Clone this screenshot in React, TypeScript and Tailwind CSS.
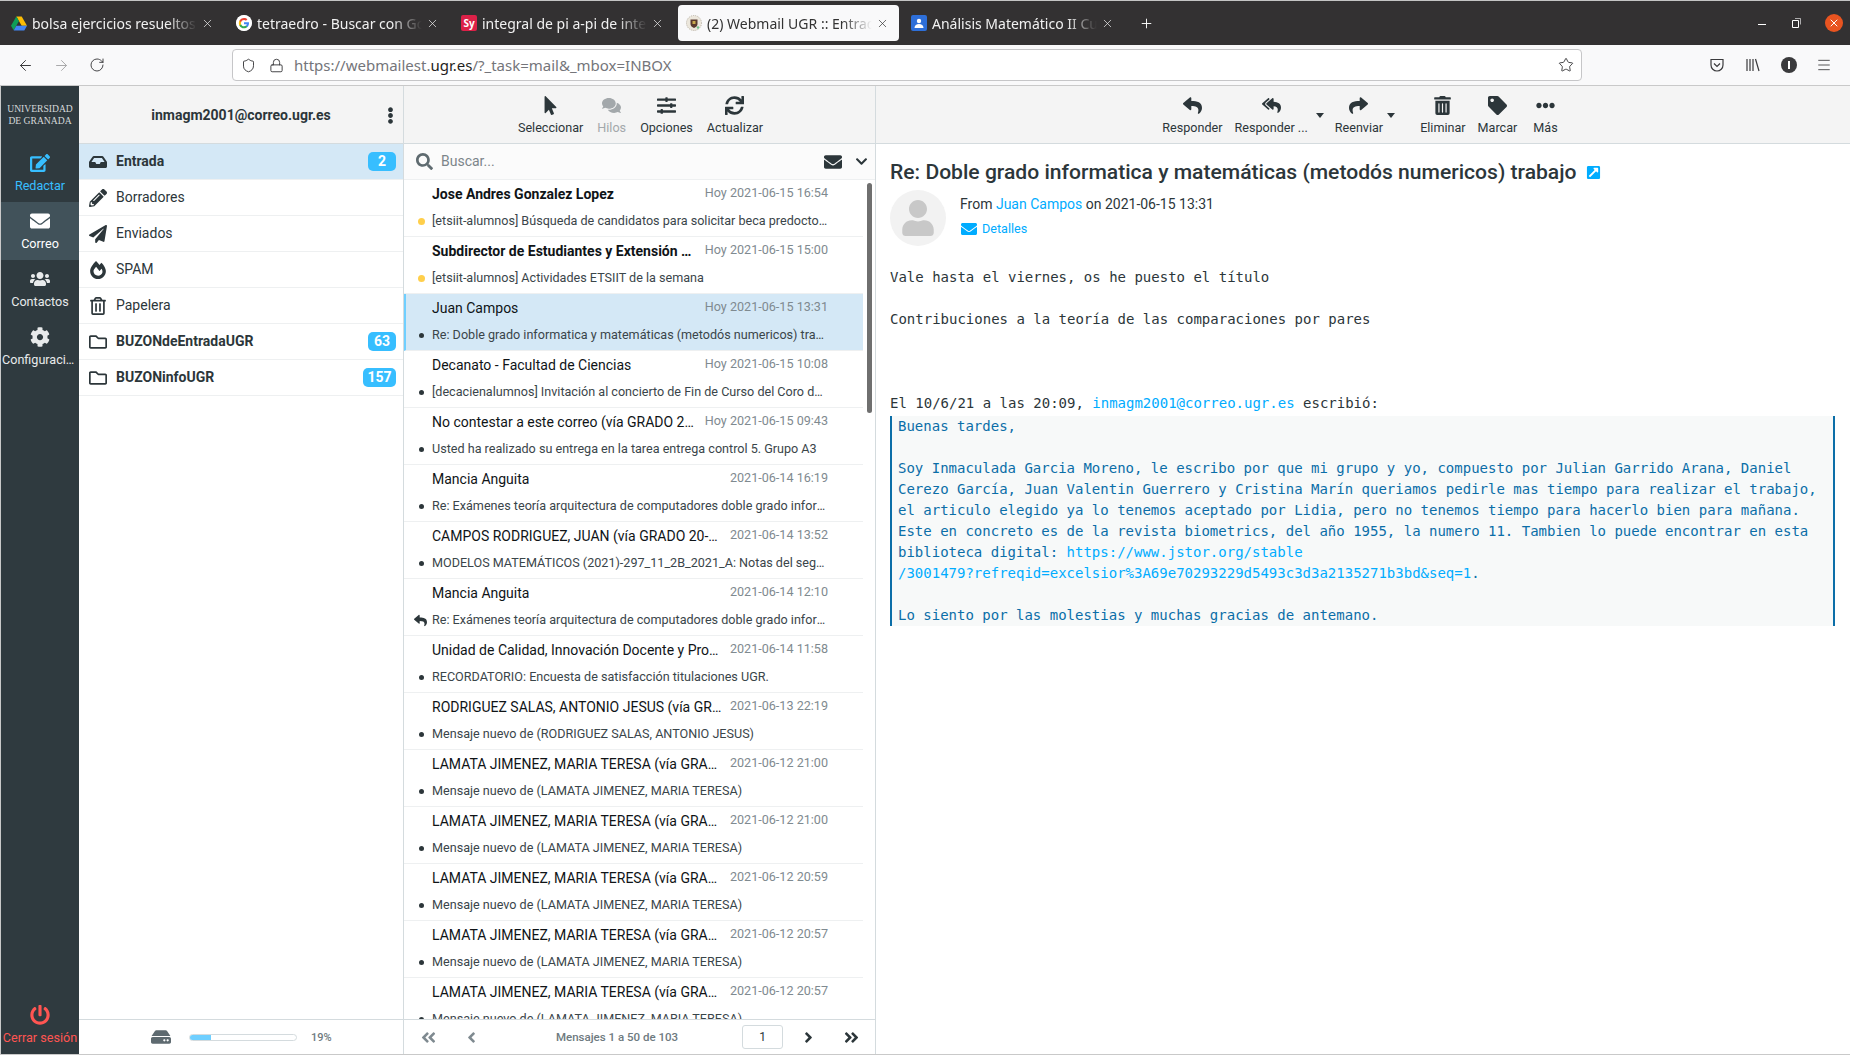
import React from "react";
import { ArrowLeft, ArrowRight, RotateCw, Shield, Lock, Star, Menu, X, Plus } from "lucide-react";
import {
  FaMousePointer, FaComments, FaSlidersH, FaSync, FaReply, FaReplyAll, FaShare, FaTrashAlt, FaTag, FaEllipsisH,
  FaEdit, FaEnvelope, FaUsers, FaCog, FaPowerOff, FaInbox, FaPencilAlt, FaPaperPlane, FaFireAlt, FaRegTrashAlt,
  FaRegFolder, FaSearch, FaChevronDown, FaHdd, FaAngleDoubleLeft, FaAngleLeft, FaAngleRight, FaAngleDoubleRight,
  FaUser, FaEllipsisV, FaExternalLinkSquareAlt,
} from "react-icons/fa";

const Drive = () => (
  <svg width="16" height="15" viewBox="0 0 16 14">
    <path d="M5.3 0h5.4L16 9.2h-5.3z" fill="#fbbc04" />
    <path d="M5.3 0 0 9.2l2.7 4.6L8 4.6z" fill="#0f9d58" />
    <path d="M2.7 14h10.6L16 9.2H5.3z" fill="#4285f4" />
  </svg>
);
const Google = () => (
  <svg width="16" height="16" viewBox="0 0 48 48" className="rounded-full bg-white">
    <circle cx="24" cy="24" r="24" fill="#fff" />
    <path d="M39 24.6c0-1.1-.1-2.1-.3-3.1H24v5.9h8.4c-.4 1.9-1.5 3.6-3.1 4.6v3.9h5c3-2.7 4.7-6.700 4.700-11.300z" fill="#4285f4" />
    <path d="M24 40c4.200 0 7.700-1.400 10.300-3.800l-5-3.900c-1.400.9-3.200 1.500-5.300 1.500-4 0-7.500-2.700-8.700-6.400h-5.200v4C12.700 36.600 17.900 40 24 40z" fill="#34a853" />
    <path d="M15.300 27.400c-.3-.9-.5-2-.5-3s.2-2.100.5-3v-4h-5.200C9.100 19.500 8.500 21.900 8.500 24.400s.6 4.900 1.600 7z" fill="#fbbc05" />
    <path d="M24 14.900c2.300 0 4.300.8 5.900 2.300l4.400-4.400C31.700 10.400 28.200 9 24 9c-6.100 0-11.300 3.400-13.900 8.400l5.200 4c1.200-3.800 4.700-6.500 8.700-6.500z" fill="#ea4335" />
  </svg>
);
const Sy = () => (
  <span className="flex h-4 w-4 items-center justify-center rounded-[2px] bg-[#dc2148] text-[10px] font-bold leading-none text-white [font-family:'Noto_Sans',sans-serif]">Sy</span>
);
const Crest = () => (
  <svg width="16" height="16" viewBox="0 0 16 16">
    <circle cx="8" cy="8" r="7.500" fill="#ece7dc" stroke="#b9b2a4" strokeWidth="1" strokeDasharray="1 1" />
    <path d="M4.500 4.500h7v4.500c0 2-1.500 3-3.500 4-2-1-3.500-2-3.500-4z" fill="#5a3a2e" />
    <path d="M6.500 6h3v3h-3z" fill="#c9a94c" />
    <circle cx="12" cy="12.500" r="1.200" fill="#6fc28b" />
  </svg>
);
const Person = () => (
  <svg width="16" height="16" viewBox="0 0 16 16">
    <rect width="16" height="16" rx="2" fill="#2e6fd9" />
    <circle cx="8" cy="6" r="2.200" fill="#fff" />
    <path d="M3.500 13c0-2.500 2-4 4.500-4s4.500 1.500 4.500 4z" fill="#fff" />
  </svg>
);

const tabs = [
  { t: "bolsa ejercicios resueltos de integrales", i: <Drive /> },
  { t: "tetraedro - Buscar con Google", i: <Google /> },
  { t: "integral de pi a-pi de integrales", i: <Sy /> },
  { t: "(2) Webmail UGR :: Entrada", i: <Crest />, a: true },
  { t: "Análisis Matemático II Curso", i: <Person /> },
];

function TabBar() {
  return (
    <div className="flex h-[45px] shrink-0 items-center border-t border-[#c4c4c4] bg-[#333132] pl-[3px] text-[14px] [font-family:'Noto_Sans',sans-serif]">
      <div className="flex gap-1">
        {tabs.map((tab) => (
          <div
            key={tab.t}
            className={`flex h-9 w-[221px] items-center rounded-[4px] pl-2 pr-[10px] ${tab.a ? "bg-[#f9f9fa] text-[#333]" : "text-[#f1f1f1]"}`}
          >
            <span className="flex w-4 shrink-0 justify-center">{tab.i}</span>
            <span className="ml-[5px] flex-1 overflow-hidden whitespace-nowrap [mask-image:linear-gradient(to_right,black_82%,transparent_100%)]">
              {tab.t}
            </span>
            <X size={13} strokeWidth={1.3} className="ml-1 shrink-0" />
          </div>
        ))}
      </div>
      <Plus size={15} strokeWidth={1.5} className="ml-[15px] text-white" />
      <div className="ml-auto flex items-center text-white">
        <span className="mt-[3px] h-px w-2 bg-white" />
        <svg width="9" height="10" viewBox="0 0 9 10" fill="none" stroke="#fff" strokeWidth="1" className="ml-[26px]">
          <path d="M.5 2.500h6v7h-6z" />
          <path d="M3 .5h5.500v6" strokeOpacity=".6" />
        </svg>
        <span className="ml-[24px] mr-[7px] flex h-[18px] w-[18px] items-center justify-center rounded-full bg-[#e95420]">
          <X size={12} strokeWidth={2} className="text-white" />
        </span>
      </div>
    </div>
  );
}

function NavBar() {
  return (
    <div className="flex h-[41px] shrink-0 items-center border-b border-[#c9c9c9] bg-[#f9f9fa] text-[#3a3a3c]">
      <ArrowLeft size={17} strokeWidth={1.4} className="ml-[17px]" />
      <ArrowRight size={17} strokeWidth={1.4} className="ml-[19px] text-[#a9a9aa]" />
      <RotateCw size={16} strokeWidth={1.4} className="ml-[19px]" />
      <div className="ml-[127px] flex h-8 w-[1350px] items-center rounded-[4px] border border-[#c6c6c8] bg-white">
        <Shield size={15} strokeWidth={1.5} className="ml-2" />
        <Lock size={15} strokeWidth={1.5} className="ml-[13px]" />
        <span className="ml-[10px] text-[15px] text-[#74757a] [font-family:'Noto_Sans',sans-serif]">
          https://webmailest.<span className="text-[#1f1f22]">ugr.es</span>/?_task=mail&amp;_mbox=INBOX
        </span>
        <Star size={16} strokeWidth={1.4} className="ml-auto mr-[7px]" />
      </div>
      <svg width="16" height="16" viewBox="0 0 16 16" fill="none" stroke="#3a3a3c" strokeWidth="1.200" className="ml-[127px]">
        <path d="M2 2.500h12v5.500a6 6 0 0 1-12 0z" />
        <path d="m5 6.500 3 3 3-3" />
      </svg>
      <svg width="16" height="16" viewBox="0 0 16 16" fill="none" stroke="#3a3a3c" strokeWidth="1.200" className="ml-[20px]">
        <path d="M2 2v12M5 2v12M8 2v12M10.500 2l3.500 12" />
      </svg>
      <span className="ml-[20px] flex h-4 w-4 items-center justify-center rounded-full bg-[#3a3a3c]">
        <span className="h-2 w-[2px] bg-white" />
      </span>
      <Menu size={16} strokeWidth={1.3} className="ml-[19px]" />
    </div>
  );
}

function SideItem({ icon, label, cls = "" }: { icon: React.ReactNode; label: string; cls?: string }) {
  return (
    <div className={`flex h-[58px] shrink-0 flex-col items-center pt-[9px] ${cls}`}>
      <span className="flex h-5 items-center justify-center text-[20px]">{icon}</span>
      <span className="mt-[5px] w-full truncate px-px text-center text-[12.6px] leading-4">{label}</span>
    </div>
  );
}

function Sidebar() {
  return (
    <div className="flex w-[79px] shrink-0 flex-col border-l border-[#c9c9c9] bg-[#2f3a3f] text-[#e8eaeb]">
      <div className="flex h-[58px] shrink-0 flex-col items-center justify-center text-[9.6px] leading-[12px] text-[#d5d8d9] [font-family:'Liberation_Serif',serif]">
        <span>UNIVERSIDAD</span>
        <span>DE GRANADA</span>
      </div>
      <SideItem icon={<FaEdit />} label="Redactar" cls="text-[#37beff]" />
      <SideItem icon={<FaEnvelope />} label="Correo" cls="bg-[#41525a] text-white" />
      <SideItem icon={<FaUsers />} label="Contactos" />
      <SideItem icon={<FaCog />} label="Configuración" />
      <SideItem icon={<FaPowerOff />} label="Cerrar sesión" cls="mt-auto text-[#ff5552]" />
    </div>
  );
}

const folders = [
  { n: "Entrada", i: <FaInbox />, b: "2", bold: true, sel: true },
  { n: "Borradores", i: <FaPencilAlt /> },
  { n: "Enviados", i: <FaPaperPlane /> },
  { n: "SPAM", i: <FaFireAlt /> },
  { n: "Papelera", i: <FaRegTrashAlt /> },
  { n: "BUZONdeEntradaUGR", i: <FaRegFolder />, b: "63", bold: true },
  { n: "BUZONinfoUGR", i: <FaRegFolder />, b: "157", bold: true },
];

function Folders() {
  return (
    <div className="flex w-[325px] shrink-0 flex-col border-r border-[#d4dbde]">
      <div className="flex h-[58px] shrink-0 items-center border-b border-[#d4dbde] bg-[#f4f4f4] pt-[2px] text-[#2c363a]">
        <span className="flex-1 pl-[21px] text-center text-[14px] font-bold">inmagm2001@correo.ugr.es</span>
        <FaEllipsisV className="mr-[4px] text-[17px]" />
      </div>
      <div className="flex-1">
        {folders.map((f) => (
          <div
            key={f.n}
            className={`flex h-9 items-center border-b border-[#eef0f1] pl-[9px] pr-[7px] text-[14px] text-[#2c363a] ${f.sel ? "bg-[#d4e8f6]" : "bg-white"} ${f.bold ? "font-bold" : ""}`}
          >
            <span className="flex w-5 justify-center text-[18px]">{f.i}</span>
            <span className="ml-[8px] flex-1">{f.n}</span>
            {f.b && (
              <span className={`flex h-[19px] items-center justify-center rounded-[5px] bg-[#37beff] text-[14px] font-bold text-white ${f.b === "157" ? "w-[33px]" : "w-[28px]"}`}>
                {f.b}
              </span>
            )}
          </div>
        ))}
      </div>
      <div className="flex h-[35px] shrink-0 items-center border-t border-[#d4dbde] pl-[72px]">
        <FaHdd className="text-[20px] text-[#5e6a70]" />
        <div className="ml-[18px] h-[7px] w-[108px] overflow-hidden rounded-full border border-[#d4dbde] bg-white">
          <div className="h-full w-[20%] bg-[#6fcfff]" />
        </div>
        <span className="ml-[14px] mt-[2px] text-[11px] font-medium text-[#6e7a80]">19%</span>
      </div>
    </div>
  );
}

function Tool({ icon, label, off }: { icon: React.ReactNode; label: string; off?: boolean }) {
  return (
    <div className={`flex flex-col items-center ${off ? "text-[#a3a8ab]" : "text-[#2c363a]"}`}>
      <span className="flex h-5 items-center text-[19px]">{icon}</span>
      <span className="mt-[5px] whitespace-nowrap text-[12.6px] leading-4">{label}</span>
    </div>
  );
}

const Caret = ({ cls }: { cls: string }) => (
  <span className={`mt-[18px] h-0 w-0 shrink-0 border-x-[4px] border-t-[5px] border-x-transparent border-t-[#2c363a] ${cls}`} />
);

type Msg = { n: string; d: string; s: string; k?: "new" | "rep"; sel?: boolean };
const lamata = "LAMATA JIMENEZ, MARIA TERESA (vía GRADO 20-21)";
const lamataS = "Mensaje nuevo de (LAMATA JIMENEZ, MARIA TERESA)";
const msgs: Msg[] = [
  { n: "Jose Andres Gonzalez Lopez", d: "Hoy 2021-06-15 16:54", s: "[etsiit-alumnos] Búsqueda de candidatos para solicitar beca predoctoral de la universidad", k: "new" },
  { n: "Subdirector de Estudiantes y Extensión de la ETSIIT", d: "Hoy 2021-06-15 15:00", s: "[etsiit-alumnos] Actividades ETSIIT de la semana", k: "new" },
  { n: "Juan Campos", d: "Hoy 2021-06-15 13:31", s: "Re: Doble grado informatica y matemáticas (metodós numericos) trabajo", sel: true },
  { n: "Decanato - Facultad de Ciencias", d: "Hoy 2021-06-15 10:08", s: "[decacienalumnos] Invitación al concierto de Fin de Curso del Coro de la Facultad" },
  { n: "No contestar a este correo (vía GRADO 2020-21)", d: "Hoy 2021-06-15 09:43", s: "Usted ha realizado su entrega en la tarea entrega control 5. Grupo A3" },
  { n: "Mancia Anguita", d: "2021-06-14 16:19", s: "Re: Exámenes teoría arquitectura de computadores doble grado informatica y" },
  { n: "CAMPOS RODRIGUEZ, JUAN (vía GRADO 20-21)", d: "2021-06-14 13:52", s: "MODELOS MATEMÁTICOS (2021)-297_11_2B_2021_A: Notas del seguimiento del curso" },
  { n: "Mancia Anguita", d: "2021-06-14 12:10", s: "Re: Exámenes teoría arquitectura de computadores doble grado informatica y", k: "rep" },
  { n: "Unidad de Calidad, Innovación Docente y Prospectiva", d: "2021-06-14 11:58", s: "RECORDATORIO: Encuesta de satisfacción titulaciones UGR." },
  { n: "RODRIGUEZ SALAS, ANTONIO JESUS (vía GRADO 20-21)", d: "2021-06-13 22:19", s: "Mensaje nuevo de (RODRIGUEZ SALAS, ANTONIO JESUS)" },
  { n: lamata, d: "2021-06-12 21:00", s: lamataS },
  { n: lamata, d: "2021-06-12 21:00", s: lamataS },
  { n: lamata, d: "2021-06-12 20:59", s: lamataS },
  { n: lamata, d: "2021-06-12 20:57", s: lamataS },
  { n: lamata, d: "2021-06-12 20:57", s: lamataS },
];

function MsgRow({ m }: { m: Msg }) {
  return (
    <div className={`flex h-[57px] shrink-0 flex-col border-b border-[#eef0f1] pr-[35px] ${m.sel ? "border-l-2 border-l-[#6fcfff] bg-[#d4e8f6] pl-[26px]" : "pl-[28px]"}`}>
      <div className="mt-1 flex h-5 items-center gap-[6px]">
        <span className={`min-w-0 flex-1 truncate text-[14px] text-[#0f1417] ${m.k === "new" ? "font-bold" : ""}`}>{m.n}</span>
        <span className="shrink-0 pb-[2px] text-[12.6px] text-[#7f8a90]">{m.d}</span>
      </div>
      <div className="relative mt-[7px] flex h-5 items-center text-[12.6px] text-[#3a454a]">
        {m.k === "rep" ? (
          <FaReply className="absolute -left-[18px] text-[13px] text-[#2c363a]" />
        ) : (
          <span className={`absolute rounded-full ${m.k === "new" ? "-left-[14px] h-[7px] w-[7px] bg-[#ffcf4b]" : "-left-[13px] h-[5px] w-[5px] bg-[#2c363a]"}`} />
        )}
        <span className="min-w-0 flex-1 truncate">{m.s}</span>
      </div>
    </div>
  );
}

function List() {
  return (
    <div className="flex w-[472px] shrink-0 flex-col border-r border-[#d4dbde]">
      <div className="flex h-[58px] shrink-0 justify-center gap-[14px] border-b border-[#d4dbde] bg-[#f4f4f4] pl-[2px] pt-[9px]">
        <Tool icon={<FaMousePointer />} label="Seleccionar" />
        <Tool icon={<FaComments />} label="Hilos" off />
        <Tool icon={<FaSlidersH />} label="Opciones" />
        <Tool icon={<FaSync />} label="Actualizar" />
      </div>
      <div className="flex h-9 shrink-0 items-center border-b border-[#eef0f1] bg-[#fbfbfb] pl-[12px] text-[#2c363a]">
        <FaSearch className="text-[17px] text-[#5f6b70]" />
        <span className="ml-[8px] flex-1 text-[14px] text-[#7b858a]">Buscar...</span>
        <FaEnvelope className="text-[18px]" />
        <FaChevronDown className="ml-[13px] mr-[7px] text-[13px]" />
      </div>
      <div className="flex min-h-0 flex-1 overflow-hidden">
        <div className="flex w-[459px] shrink-0 flex-col">
          {msgs.map((m, i) => (
            <MsgRow key={i} m={m} />
          ))}
        </div>
        <div className="flex-1 pl-1 pt-[3px]">
          <div className="h-[230px] w-[5px] rounded-full bg-[#6f6f6f]" />
        </div>
      </div>
      <div className="flex h-[35px] shrink-0 items-center border-t border-[#d4dbde] text-[#2c363a]">
        <FaAngleDoubleLeft className="ml-[16px] text-[17px] text-[#7f8a90]" />
        <FaAngleLeft className="ml-[26px] text-[17px] text-[#7f8a90]" />
        <span className="ml-[76px] mt-[2px] w-[142px] text-[11.5px] font-medium text-[#6e7a80]">Mensajes 1 a 50 de 103</span>
        <span className="ml-[44px] flex h-[24px] w-[41px] items-center justify-center rounded-[3px] border border-[#d4dbde] text-[12px]">1</span>
        <FaAngleRight className="ml-[17px] text-[17px]" />
        <FaAngleDoubleRight className="ml-[26px] text-[17px]" />
      </div>
    </div>
  );
}

const quote: React.ReactNode[] = [
  "Buenas tardes,",
  " ",
  "Soy Inmaculada Garcia Moreno, le escribo por que mi grupo y yo, compuesto por Julian Garrido Arana, Daniel",
  "Cerezo García, Juan Valentin Guerrero y Cristina Marín queriamos pedirle mas tiempo para realizar el trabajo,",
  "el articulo elegido ya lo tenemos aceptado por Lidia, pero no tenemos tiempo para hacerlo bien para mañana.",
  "Este en concreto es de la revista biometrics, del año 1955, la numero 11. Tambien lo puede encontrar en esta",
  <>biblioteca digital: <span className="text-[#00acff]">https://www.jstor.org/stable</span></>,
  <><span className="text-[#00acff]">/3001479?refreqid=excelsior%3A69e70293229d5493c3d3a2135271b3bd&amp;seq=1</span>.</>,
  " ",
  "Lo siento por las molestias y muchas gracias de antemano.",
];

function Content() {
  return (
    <div className="flex min-w-0 flex-1 flex-col">
      <div className="flex h-[58px] shrink-0 justify-center border-b border-[#d4dbde] bg-[#f4f4f4] pr-[6px] pt-[9px]">
        <Tool icon={<FaReply />} label="Responder" />
        <span className="ml-[12px]"><Tool icon={<FaReplyAll />} label="Responder ..." /></span>
        <Caret cls="ml-2" />
        <span className="ml-[11px]"><Tool icon={<FaShare />} label="Reenviar" /></span>
        <Caret cls="ml-1" />
        <span className="ml-[25px]"><Tool icon={<FaTrashAlt />} label="Eliminar" /></span>
        <span className="ml-[12px]"><Tool icon={<FaTag />} label="Marcar" /></span>
        <span className="ml-[16px]"><Tool icon={<FaEllipsisH />} label="Más" /></span>
      </div>
      <div className="flex-1 bg-white pl-[14px] pr-[15px] pt-[16px]">
        <div className="flex h-6 items-center text-[21.1px] font-medium text-[#2c363a]">
          <span className="whitespace-nowrap">Re: Doble grado informatica y matemáticas (metodós numericos) trabajo</span>
          <FaExternalLinkSquareAlt className="ml-[9px] text-[15px] text-[#00acff]" />
        </div>
        <div className="mt-[6px] flex h-14">
          <div className="flex h-14 w-14 items-end justify-center overflow-hidden rounded-full bg-[#f2f2f2] text-[#c8c8c8]">
            <FaUser className="mb-[10px] text-[36px]" />
          </div>
          <div className="ml-[14px] pt-1">
            <div className="text-[14px] leading-5 text-[#2c363a]">
              From <span className="text-[#00acff]">Juan Campos</span> on 2021-06-15 13:31
            </div>
            <div className="mt-[6px] flex items-center text-[12.6px] text-[#00acff]">
              <FaEnvelope className="ml-[1px] text-[16px]" />
              <span className="ml-[5px]">Detalles</span>
            </div>
          </div>
        </div>
        <div className="mt-[21px] whitespace-pre text-[14px] leading-[21px] text-[#2c363a] [font-family:'DejaVu_Sans_Mono',monospace]">
          <div>Vale hasta el viernes, os he puesto el título</div>
          <div> </div>
          <div>Contribuciones a la teoría de las comparaciones por pares</div>
          <div> </div>
          <div> </div>
          <div> </div>
          <div>
            El 10/6/21 a las 20:09, <span className="text-[#00acff]">inmagm2001@correo.ugr.es</span> escribió:
          </div>
          <div className="mt-[2px] border-x-2 border-[#0b6ea8] bg-[#f7f9f9] pl-[6px] text-[#0b6ea8]">
            {quote.map((q, i) => (
              <div key={i}>{q}</div>
            ))}
          </div>
        </div>
      </div>
    </div>
  );
}

export default function App() {
  return (
    <div className="flex h-[1055px] w-[1850px] flex-col overflow-hidden bg-white [font-family:Roboto,sans-serif]">
      <TabBar />
      <NavBar />
      <div className="flex min-h-0 flex-1 border-b border-[#c9c9c9]">
        <Sidebar />
        <Folders />
        <List />
        <Content />
      </div>
    </div>
  );
}
